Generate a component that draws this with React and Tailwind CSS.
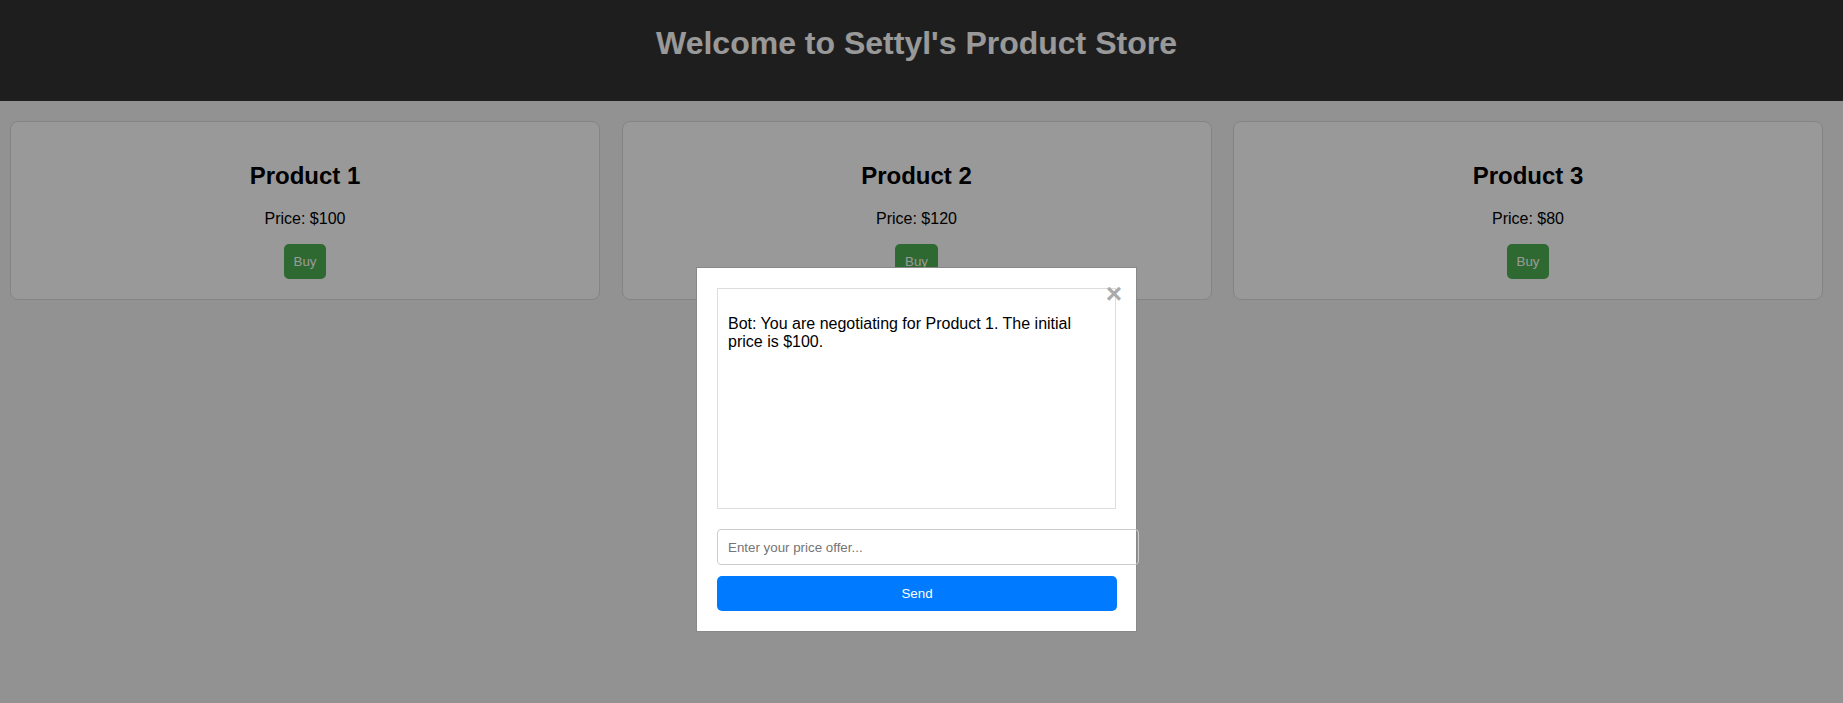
import { useState } from 'react'

const products = [
  { id: 1, name: 'Product 1', price: 100 },
  { id: 2, name: 'Product 2', price: 120 },
  { id: 3, name: 'Product 3', price: 80 },
]

function ProductCard({ product, onBuy }) {
  return (
    <div className="w-[590px] bg-white border border-[#dcdcdc] rounded-lg p-5 text-center">
      <h2 className="text-[24px] font-bold leading-[27.6px] mt-[20px] mb-[20px] text-black">{product.name}</h2>
      <p className="text-[16px] leading-[18.4px] mb-4 text-black">Price: ${product.price}</p>
      <button
        onClick={() => onBuy(product)}
        className="bg-[#4caf50] text-white text-[13.33px] leading-[15px] px-[10px] py-[10px] rounded-[5px]"
      >
        Buy
      </button>
    </div>
  )
}

export default function App() {
  const [active, setActive] = useState(products[0])
  const [offer, setOffer] = useState('')
  const [messages, setMessages] = useState([
    `Bot: You are negotiating for ${products[0].name}. The initial price is $${products[0].price}.`,
  ])

  const openChat = (product) => {
    setActive(product)
    setMessages([`Bot: You are negotiating for ${product.name}. The initial price is $${product.price}.`])
  }

  const send = () => {
    if (!offer) return
    setMessages([...messages, `You: $${offer}`])
    setOffer('')
  }

  return (
    <div className="min-h-screen bg-[#f4f4f4] font-['Liberation_Sans',Arial,sans-serif]">
      <header className="h-[101px] bg-[#333333] pt-[25px] pr-[10px] text-center">
        <h1 className="text-[32px] font-bold leading-[36.8px] text-white">Welcome to Settyl's Product Store</h1>
      </header>

      <div className="flex gap-[21.5px] pl-[10px] pt-[20px]">
        {products.map((p) => (
          <ProductCard key={p.id} product={p} onBuy={openChat} />
        ))}
      </div>

      {active && (
        <div className="fixed inset-0 bg-black/40">
          <div className="absolute left-[696px] top-[267px] w-[441px] bg-white border border-[#888] p-5">
            <button
              onClick={() => setActive(null)}
              className="absolute right-[14px] top-[12px] text-[28px] font-bold leading-[28px] text-[#aaa]"
            >
              ×
            </button>
            <div className="h-[221px] border border-[#ddd] px-[10px] pb-[10px] pt-[10px] overflow-y-auto">
              {messages.map((m, i) => (
                <p key={i} className="mt-4 text-[16px] leading-[18.4px] text-black">{m}</p>
              ))}
            </div>
            <input
              type="text"
              value={offer}
              onChange={(e) => setOffer(e.target.value)}
              placeholder="Enter your price offer..."
              className="mt-5 block w-[422px] h-[36px] px-[10px] border border-[#ccc] rounded-[4px] text-[13.33px] placeholder:text-[#757575] outline-none"
            />
            <button
              onClick={send}
              className="mt-[11px] block w-[400px] h-[35px] bg-[#007bff] text-white text-[13.33px] rounded-[5px]"
            >
              Send
            </button>
          </div>
        </div>
      )}
    </div>
  )
}
